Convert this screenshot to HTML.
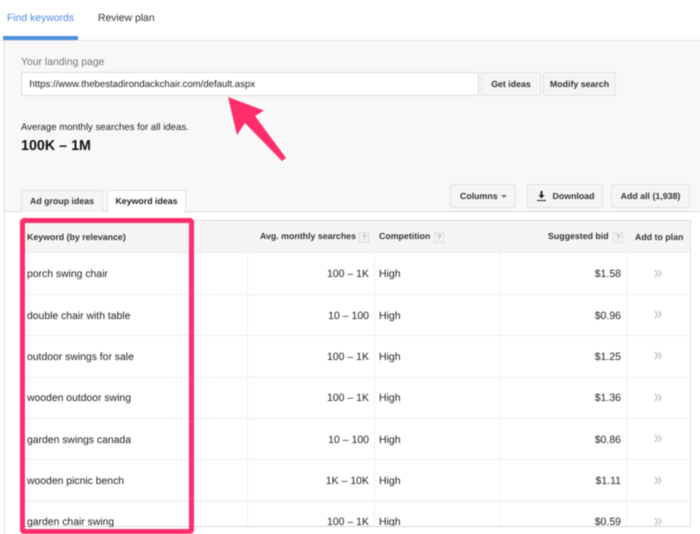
<!DOCTYPE html>
<html><head><meta charset="utf-8"><style>
html,body{margin:0;padding:0;background:#fff}
#p{position:relative;width:700px;height:534px;overflow:hidden;background:#fff;font-family:"Liberation Sans",sans-serif;color:#222;font-size:10.5px;filter:blur(.4px);text-rendering:geometricPrecision}
#p div{position:absolute;box-sizing:border-box;white-space:nowrap}
.b{background:#f5f5f5;border:1px solid #e2e2e2;border-radius:2px;font-weight:bold;font-size:8.8px;color:#333;text-align:center}
.h{font-weight:bold;font-size:8.8px;color:#333;line-height:12px}
.q{width:10px;height:11px;background:#f4f4f4;border:1px solid #ddd;color:#999;font-size:8px;line-height:9px;text-align:center}
.t{left:27px;line-height:14px;font-size:10.4px;color:#222;margin-top:1px}
.n{width:120px;left:249px;text-align:right;line-height:14px;color:#222}
.c{left:379px;line-height:14px;color:#222}
.m{width:80px;left:541px;text-align:right;line-height:14px;color:#222}
.l{left:21px;width:668px;height:1px;background:#ececec}
.v{top:253px;width:1px;height:273px;background:#f0f0f0}
</style></head><body><div id="p">
<div style="left:7px;top:11.500px;font-size:10.4px;line-height:14px;color:#4f8ae2">Find keywords</div>
<div style="left:98px;top:11.500px;font-size:10.4px;line-height:14px;color:#333">Review plan</div>
<div style="left:3px;top:36px;width:75px;height:4px;background:#4a8fdc"></div>

<div style="left:4px;top:40px;width:696px;height:172px;background:#f8f8f8"></div>
<div style="left:0;top:40px;width:700px;height:1px;background:#e2e2e2"></div>
<div style="left:4px;top:40px;width:1px;height:494px;background:#dedede"></div>

<div style="left:21px;top:55.500px;font-size:10.4px;line-height:14px;color:#777">Your landing page</div>
<div style="left:21px;top:72px;width:458px;height:24px;background:#fff;border:1px solid #dcdcdc;padding-left:7.500px;line-height:23px;font-size:9.6px;color:#222">https://www.thebestadirondackchair.com/default.aspx</div>
<div class="b" style="left:481px;top:72px;width:60px;height:24px;line-height:23px">Get ideas</div>
<div class="b" style="left:543px;top:72px;width:73px;height:24px;line-height:23px">Modify search</div>

<div style="left:21px;top:121px;font-size:9.6px;line-height:14px;color:#222">Average monthly searches for all ideas.</div>
<div style="left:21px;top:136.500px;font-size:14.300px;line-height:18px;font-weight:bold;color:#111">100K – 1M</div>

<div class="b" style="left:450px;top:184px;width:66px;height:24px;line-height:23px;text-align:left;padding-left:9px">Columns</div>
<div style="left:501px;top:195px;width:0;height:0;border:3px solid transparent;border-top:3px solid #777"></div>
<div class="b" style="left:527px;top:184px;width:76px;height:24px;line-height:23px;text-align:left;padding-left:24.500px">Download</div>
<svg style="position:absolute;left:536px;top:190px" width="12" height="12" viewBox="0 0 12 12"><path d="M4.500 1h2v4h2L5.500 8.500 2.500 5h2z" fill="#222"/><rect x="1" y="10" width="9" height="1" fill="#222"/></svg>
<div class="b" style="left:611px;top:184px;width:79px;height:24px;line-height:23px">Add all (1,938)</div>

<div style="left:4px;top:211px;width:696px;height:1px;background:#dcdcdc"></div>
<div class="b" style="left:21px;top:190px;width:82px;height:22px;line-height:21px;border-bottom:0">Ad group ideas</div>
<div class="b" style="left:107px;top:190px;width:79px;height:23px;line-height:21px;background:#fff;border-bottom:0;color:#222">Keyword ideas</div>

<div style="left:20px;top:220px;width:671px;height:307px;background:#fff;border:1px solid #dedede;border-bottom:0"></div>
<div style="left:21px;top:221px;width:669px;height:32px;background:#f5f5f5;border-bottom:1px solid #ebebeb"></div>
<div style="left:20px;top:526px;width:671px;height:1px;background:#d8d8d8"></div>

<div class="v" style="left:247px"></div><div class="v" style="left:374px"></div><div class="v" style="left:500px"></div><div class="v" style="left:626px"></div>
<div class="l" style="top:294px"></div><div class="l" style="top:335px"></div><div class="l" style="top:377px"></div><div class="l" style="top:418px"></div><div class="l" style="top:459px"></div><div class="l" style="top:500px;height:2px;background:#f2f2f2"></div>

<div class="h" style="left:27px;top:231px">Keyword (by relevance)</div>
<div class="h" style="left:260px;top:230px">Avg. monthly searches</div><div class="q" style="left:359px;top:232px">?</div>
<div class="h" style="left:379px;top:230px">Competition</div><div class="q" style="left:434px;top:232px">?</div>
<div class="h" style="left:548px;top:230px">Suggested bid</div><div class="q" style="left:613px;top:232px">?</div>
<div class="h" style="left:635px;top:231px">Add to plan</div>

<div class="t" style="top:267px">porch swing chair</div><div class="n" style="top:267px">100 – 1K</div><div class="c" style="top:267px">High</div><div class="m" style="top:267px">$1.58</div>
<div class="t" style="top:308.500px">double chair with table</div><div class="n" style="top:308.500px">10 – 100</div><div class="c" style="top:308.500px">High</div><div class="m" style="top:308.500px">$0.96</div>
<div class="t" style="top:350px">outdoor swings for sale</div><div class="n" style="top:350px">100 – 1K</div><div class="c" style="top:350px">High</div><div class="m" style="top:350px">$1.25</div>
<div class="t" style="top:391px">wooden outdoor swing</div><div class="n" style="top:391px">100 – 1K</div><div class="c" style="top:391px">High</div><div class="m" style="top:391px">$1.36</div>
<div class="t" style="top:432.500px">garden swings canada</div><div class="n" style="top:432.500px">10 – 100</div><div class="c" style="top:432.500px">High</div><div class="m" style="top:432.500px">$0.86</div>
<div class="t" style="top:474px">wooden picnic bench</div><div class="n" style="top:474px">1K – 10K</div><div class="c" style="top:474px">High</div><div class="m" style="top:474px">$1.11</div>
<div class="t" style="top:515px;height:11px;overflow:hidden">garden chair swing</div><div class="n" style="top:515px;height:11px;overflow:hidden">100 – 1K</div><div class="c" style="top:515px;height:11px;overflow:hidden">High</div><div class="m" style="top:515px;height:11px;overflow:hidden">$0.59</div>

<svg style="position:absolute;left:0;top:0" width="700" height="534" fill="none" stroke="#c4c4c4" stroke-width="1.500">
<path d="M655 270l2.500 3.500-2.500 3.500M658.500 270l2.500 3.500-2.500 3.500"/>
<path d="M655 311l2.500 3.500-2.500 3.500M658.500 311l2.500 3.500-2.500 3.500"/>
<path d="M655 352l2.500 3.500-2.500 3.500M658.500 352l2.500 3.500-2.500 3.500"/>
<path d="M655 394l2.500 3.500-2.500 3.500M658.500 394l2.500 3.500-2.500 3.500"/>
<path d="M655 435l2.500 3.500-2.500 3.500M658.500 435l2.500 3.500-2.500 3.500"/>
<path d="M655 477l2.500 3.500-2.500 3.500M658.500 477l2.500 3.500-2.500 3.500"/>
<path d="M655 518l2.500 3.500-2.500 3.500M658.500 518l2.500 3.500-2.500 3.500"/>
</svg>

<div style="left:20px;top:218px;width:174px;height:316px;border:5.500px solid #ff2d6c;border-radius:4px"></div>
<svg style="position:absolute;left:0;top:0" width="700" height="534"><path d="M228 97L264 110.500 255 116 286 158 282 161 245 123 237 135z" fill="#ff2d6c"/></svg>
</div></body></html>
